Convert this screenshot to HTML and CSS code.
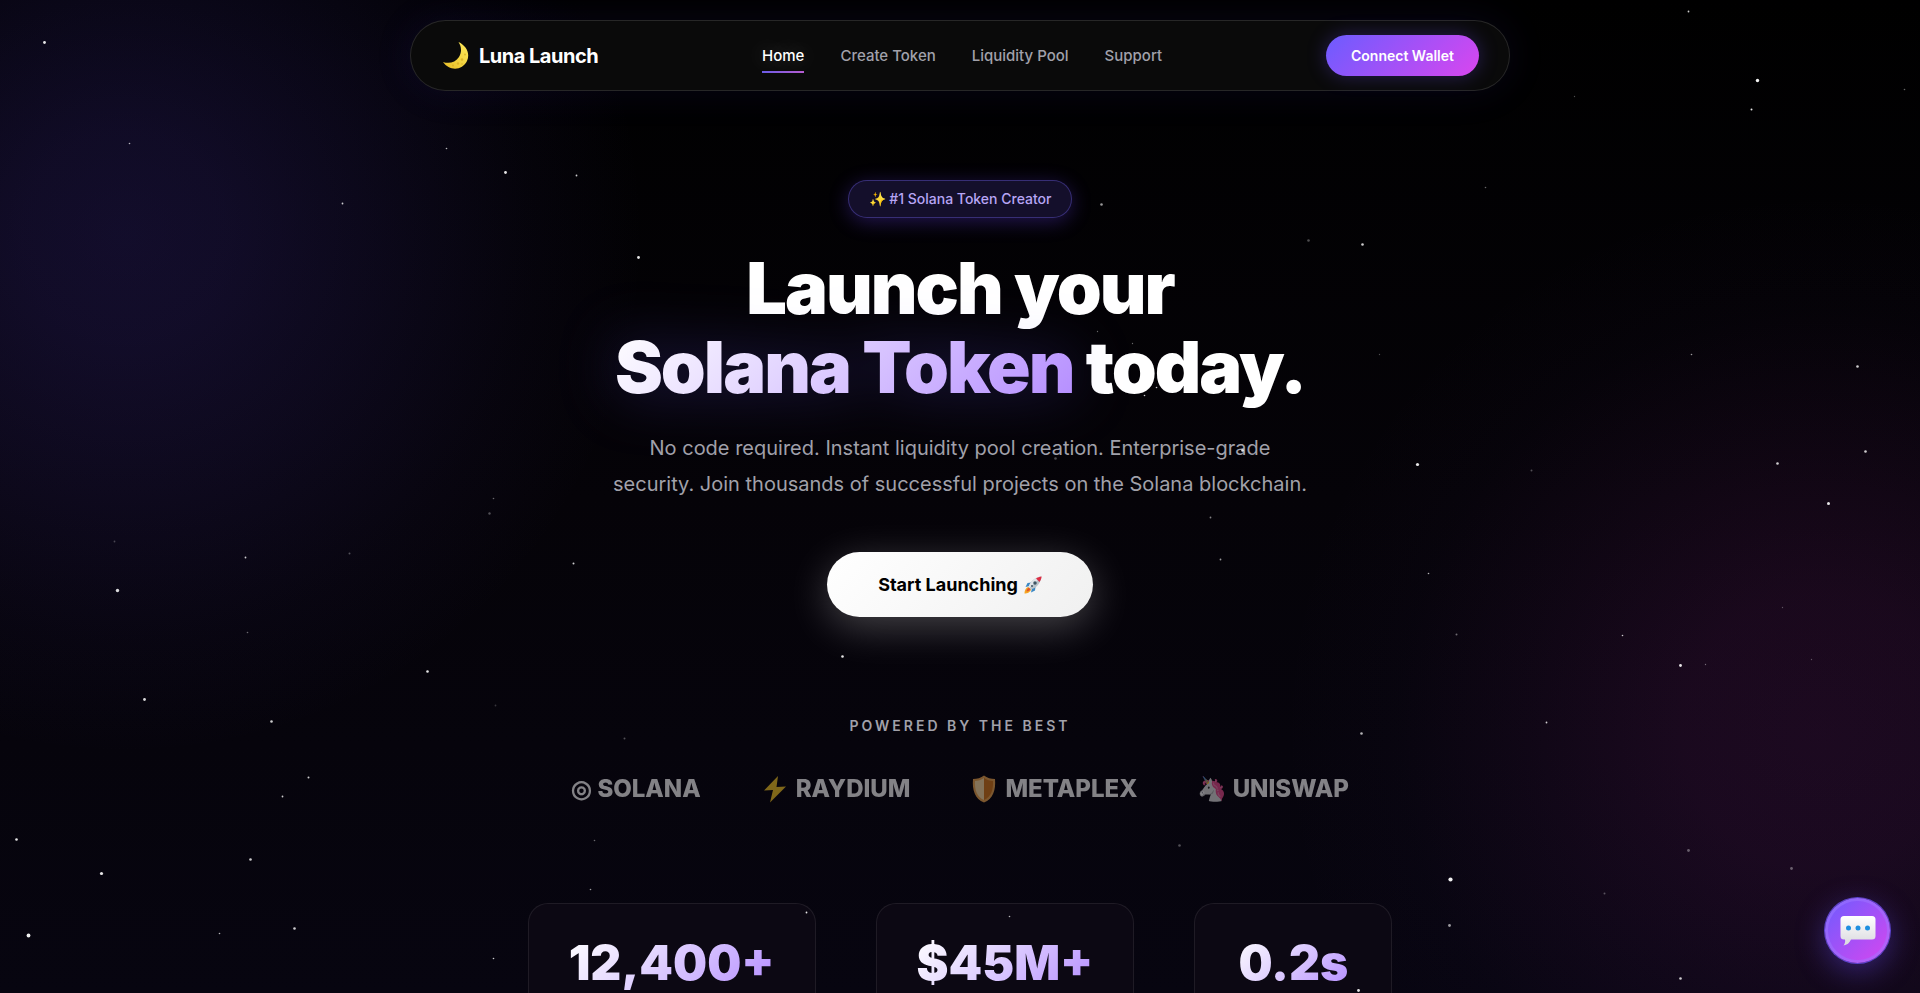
FILE: index.html
```html
<!DOCTYPE html>
<html lang="en">
<head>
<meta charset="utf-8">
<meta name="viewport" content="width=device-width, initial-scale=1">
<title>Luna Launch</title>
<link rel="stylesheet" href="styles.css">
</head>
<body>
<svg class="stars" id="stars" viewBox="0 0 1920 993" preserveAspectRatio="xMidYMid slice" aria-hidden="true"></svg>
<header class="site-header">
  <nav class="nav">
    <a class="logo" href="#">
      <svg class="logo-icon" viewBox="0 0 28 28" aria-hidden="true">
        <defs><linearGradient id="moon" x1="0" y1="1" x2="1" y2="0"><stop offset="0" stop-color="#e8bd25"/><stop offset="1" stop-color="#fdea5c"/></linearGradient></defs>
        <path fill="url(#moon)" d="M16.500 0.500C24 4 28.500 11.500 25 19.500C20.500 29 7.500 30 1 20.500C7 22.500 13.500 21 17 15.500C20 10.500 19.500 5 16.500 .5Z"/>
        <g fill="#d3a81f" opacity=".7"><circle cx="20" cy="18" r="1.300"/><circle cx="16" cy="22" r="1.200"/><circle cx="23" cy="13" r="1"/><circle cx="20" cy="22.500" r=".8"/><circle cx="11" cy="24" r=".9"/></g>
      </svg>
      <span>Luna Launch</span>
    </a>
    <div class="nav-links">
      <a class="nav-link nav-link-active" href="#">Home</a>
      <a class="nav-link" href="#">Create Token</a>
      <a class="nav-link" href="#">Liquidity Pool</a>
      <a class="nav-link" href="#">Support</a>
    </div>
    <button class="wallet" type="button">Connect Wallet</button>
  </nav>
</header>
<main class="hero">
  <div class="badge">✨ #1 Solana Token Creator</div>
  <h1 class="title">Launch your<br><span class="title-accent">Solana Token</span> today.</h1>
  <p class="lead">No code required. Instant liquidity pool creation. Enterprise-grade security. Join thousands of successful projects on the Solana blockchain.</p>
  <button class="cta" type="button">
    <span>Start Launching</span>
    <svg class="cta-icon" viewBox="0 0 36 36" aria-hidden="true">
      <path fill="#f5a623" d="M9 22C4 23 1 29 1 35C7 35 13 32 14 27Z"/>
      <path fill="#e2542b" d="M10 23C7 25 5 28 5 31C9 31 12 29 13 26Z"/>
      <path fill="#3b88c3" d="M15 13L7 14L3 22L12 20ZM23 21L22 29L14 33L16 24Z"/>
      <path fill="#b9c2c9" d="M35 1C24 2 13 9 9 22L14 27C27 23 34 12 35 1Z"/>
      <path fill="#dfe4e8" d="M35 1C24 2 13 9 9 22L11 24L30 6Z"/>
      <path fill="#dd2e44" d="M35 1C31 1 27 3 24 5L31 12C33 9 35 5 35 1Z"/>
      <circle cx="22" cy="14" r="3.500" fill="#3f5563"/>
      <circle cx="16" cy="20" r="2" fill="#3f5563"/>
    </svg>
  </button>
  <section class="partners">
    <h2 class="partners-title">Powered by the best</h2>
    <div class="partners-row">
      <span>◎ SOLANA</span>
      <span class="partner">
        <svg class="partner-icon" viewBox="0 0 24 28" aria-hidden="true"><path fill="#f7c927" d="M15 1L1 15.500L10 15L7 27.500L23 11.500L13.500 12Z"/></svg>
        RAYDIUM
      </span>
      <span class="partner">
        <svg class="partner-icon" viewBox="0 0 24 28" aria-hidden="true">
          <path fill="#f0a850" d="M12 0.500C9 3 5 4 1 4C0 15 3 24 12 27.500C21 24 24 15 23 4C19 4 15 3 12 .5Z"/>
          <path fill="#ffdfa5" d="M12 3C9 5 6 6 3 6C2.500 15 5 22 12 25Z"/>
          <path fill="#d87a1c" d="M12 3C15 5 18 6 21 6C21.500 15 19 22 12 25Z"/>
        </svg>
        METAPLEX
      </span>
      <span>🦄 UNISWAP</span>
    </div>
  </section>
  <section class="stats">
    <div class="stat"><span class="stat-value">12,400+</span></div>
    <div class="stat"><span class="stat-value">$45M+</span></div>
    <div class="stat"><span class="stat-value">0.2s</span></div>
  </section>
</main>
<button class="chat" type="button" aria-label="Open chat">
  <svg class="chat-icon" viewBox="0 0 36 32" aria-hidden="true">
    <defs><linearGradient id="bubble" x1="0" y1="0" x2="0" y2="1"><stop offset="0" stop-color="#fff"/><stop offset="1" stop-color="#d9d9de"/></linearGradient></defs>
    <path fill="url(#bubble)" d="M4 1H32Q35.500 1 35.500 4.500V21Q35.500 24.500 32 24.500H11C9.500 28 7 30 3.500 30.500C5 28.500 5.500 26.500 5 24.500H4Q.5 24.500 .5 21V4.500Q.5 1 4 1Z"/>
    <g fill="#1e8fe0"><circle cx="8.500" cy="13" r="2.500"/><circle cx="18" cy="13" r="2.500"/><circle cx="27.500" cy="13" r="2.500"/></g>
  </svg>
</button>
<script src="stars.js"></script>
</body>
</html>
```

FILE: styles.css
```css
* { box-sizing: border-box; margin: 0; padding: 0; }

body {
  height: 100vh;
  overflow: hidden;
  background:
    radial-gradient(circle 520px at 125px 235px, rgba(84, 60, 200, 0.2) 0%, rgba(84, 60, 200, 0.18) 20%, rgba(84, 60, 200, 0.11) 50%, rgba(84, 60, 200, 0.04) 78%, transparent 100%),
    radial-gradient(circle 540px at calc(100% - 100px) 730px, rgba(190, 50, 180, 0.12) 0%, rgba(190, 50, 180, 0.11) 25%, rgba(170, 50, 180, 0.06) 55%, rgba(120, 50, 180, 0.02) 78%, transparent 100%),
    linear-gradient(180deg, #000 0%, #050308 50%, #070510 100%);
  color: #fff;
  font-family: Inter, "Liberation Sans", sans-serif;
}

a { color: inherit; text-decoration: none; }
button { border: 0; font-family: inherit; cursor: pointer; }

.stars { position: fixed; inset: 0; width: 100%; height: 100%; pointer-events: none; z-index: 2; fill: #fff; }

.site-header { padding: 20px 20px 0; }
.nav {
  display: flex;
  justify-content: space-between;
  align-items: center;
  max-width: 1100px;
  margin: 0 auto;
  padding: 14px 30px;
  border: 1px solid rgba(255, 255, 255, 0.12);
  border-radius: 50px;
  background: #0a0a0a;
  box-shadow: 0 0 40px rgba(80, 60, 220, 0.1);
}
.logo { display: flex; align-items: center; gap: 9px; padding-left: 1px; font-size: 20px; font-weight: 700; letter-spacing: -0.5px; }
.logo-icon { width: 28px; height: 29px; }
.nav-links { display: flex; gap: 36px; }
.nav-link { position: relative; color: #a1a1aa; font-size: 15px; font-weight: 500; line-height: 20px; }
.nav-link-active { color: #fff; text-shadow: 0 0 20px rgba(255, 255, 255, 0.3); }
.nav-link-active::after {
  content: "";
  position: absolute;
  left: 0;
  right: 0;
  bottom: -7px;
  height: 2px;
  background: linear-gradient(90deg, #6c5ce7, #b65cd0);
}
.wallet {
  padding: 12px 25px;
  border-radius: 30px;
  background: linear-gradient(135deg, #6c5cff, #d946ef);
  box-shadow: 0 0 20px rgba(108, 80, 255, 0.3);
  color: #fff;
  font-size: 14px;
  font-weight: 600;
  line-height: 17px;
}

.hero { display: flex; flex-direction: column; align-items: center; padding: 89px 20px 0; text-align: center; }
.badge {
  padding: 8px 20px;
  border: 1px solid rgba(108, 92, 231, 0.4);
  border-radius: 30px;
  background: #140f2b;
  box-shadow: 0 4px 20px rgba(108, 70, 255, 0.3);
  color: #b7a5f5;
  font-size: 14px;
  font-weight: 500;
  line-height: 20px;
}
.title { margin-top: 30px; font-size: 72px; font-weight: 900; line-height: 79px; letter-spacing: -2px; }
.title-accent {
  background: linear-gradient(135deg, #fff 0%, #e2d4ff 40%, #b48cff 100%);
  background-clip: text;
  -webkit-background-clip: text;
  color: transparent;
  filter: drop-shadow(0 0 30px rgba(108, 92, 255, 0.3));
}
.lead { max-width: 700px; margin-top: 24px; color: #a1a1aa; font-size: 20px; line-height: 36px; }
.cta {
  display: flex;
  align-items: center;
  gap: 6px;
  margin-top: 50px;
  padding: 21px 51px;
  border-radius: 50px;
  background: linear-gradient(135deg, #fff, #f0f0f0);
  box-shadow: 0 10px 40px rgba(255, 255, 255, 0.25);
  color: #000;
  font-size: 18px;
  font-weight: 700;
  line-height: 23px;
}
.cta-icon { width: 18px; height: 18px; }
.partners { margin-top: 100px; }
.partners-title { color: #a1a1aa; font-size: 14px; font-weight: 600; line-height: 18px; letter-spacing: 3px; text-transform: uppercase; }
.partners-row { display: flex; justify-content: center; gap: 60px; margin-top: 38px; font-size: 24px; font-weight: 800; line-height: 32px; opacity: 0.5; }
.partner { display: flex; align-items: center; gap: 7px; }
.partner-icon { width: 28px; height: 28px; }
.stats { display: flex; justify-content: center; gap: 60px; margin-top: 98px; }
.stat {
  min-width: 198px;
  padding: 30px 40px;
  border: 1px solid rgba(255, 255, 255, 0.08);
  border-radius: 20px;
  background: #0c0813;
}
.stat-value {
  display: inline-block;
  background: linear-gradient(135deg, #fff 0%, #e2d4ff 40%, #b48cff 100%);
  background-clip: text;
  -webkit-background-clip: text;
  color: transparent;
  font-size: 48px;
  font-weight: 900;
  line-height: 58px;
}
.chat {
  display: grid;
  place-items: center;
  position: fixed;
  right: 30px;
  bottom: 30px;
  width: 65px;
  height: 65px;
  border-radius: 50%;
  background: linear-gradient(135deg, #6c5cff, #d946ef);
  box-shadow: inset 0 0 0 3px rgba(160, 120, 255, 0.5), 0 0 0 1px rgba(108, 80, 240, 0.8), 0 8px 30px rgba(108, 80, 255, 0.4);
}
.chat-icon { width: 36px; height: 32px; }
```

FILE: stars.js
```js
// Each star: x, y, radius, opacity
const stars = [
  [44, 42, 1.3, 0.9], [129, 143, 0.7, 0.7], [342, 203, 0.8, 0.8], [446, 148, 0.7, 0.7], [505, 172, 1.3, 0.9],
  [576, 175, 0.8, 0.8], [114, 541, 0.8, 0.25], [117, 590, 1.6, 0.85], [245, 557, 0.8, 0.8], [349, 553, 0.9, 0.3],
  [489, 513, 1.1, 0.3], [493, 498, 0.7, 0.4], [573, 563, 0.9, 0.8], [247, 632, 0.7, 0.4], [144, 699, 1.3, 0.85],
  [271, 721, 1.2, 0.8], [427, 671, 1.2, 0.9], [495, 705, 0.8, 0.2], [308, 777, 0.9, 0.8], [282, 796, 0.8, 0.8],
  [16, 839, 1.2, 0.9], [101, 873, 1.5, 0.9], [250, 859, 1.2, 0.8], [28, 935, 1.8, 0.95], [219, 933, 0.7, 0.7],
  [294, 928, 1.2, 0.8], [493, 958, 0.7, 0.8], [594, 840, 0.7, 0.4], [590, 889, 0.7, 0.6],
  [1688, 11, 0.8, 0.8], [1757, 80, 1.6, 0.95], [1751, 109, 0.9, 0.9], [1574, 96, 0.6, 0.3], [1904, 89, 0.7, 0.4],
  [1485, 187, 0.7, 0.4], [1362, 244, 1.2, 0.8], [1691, 354, 0.7, 0.6], [1379, 354, 0.6, 0.3], [1857, 366, 1.2, 0.8],
  [1865, 451, 1.2, 0.8], [1777, 463, 1.2, 0.8], [1828, 503, 1.4, 0.9], [1417, 464, 1.5, 0.9], [1531, 470, 0.9, 0.3],
  [1428, 573, 0.7, 0.7], [1456, 634, 0.9, 0.4], [1622, 635, 0.7, 0.8], [1782, 607, 0.6, 0.3], [1680, 665, 1.3, 0.9],
  [1705, 664, 0.6, 0.4], [1811, 659, 0.6, 0.3], [1546, 722, 0.8, 0.8], [1361, 733, 1.2, 0.7], [1688, 850, 1.3, 0.35],
  [1791, 868, 1.3, 0.35], [1450, 879, 2, 0.95], [1449, 925, 1.3, 0.6], [1604, 893, 0.9, 0.3], [1680, 978, 1.2, 0.8],
  [1358, 990, 1.3, 0.9], [638, 257, 1.3, 0.9], [842, 656, 1.2, 0.9], [1101, 204, 1.2, 0.6], [1308, 240, 1.2, 0.3],
  [1242, 450, 1.2, 0.9], [1055, 458, 1.2, 0.3], [1210, 517, 0.8, 0.5], [1220, 559, 0.8, 0.6], [624, 738, 0.9, 0.3],
  [1179, 845, 1.2, 0.3], [806, 912, 0.8, 0.9], [1009, 916, 0.7, 0.7], [1144, 395, 0.7, 0.8], [1156, 387, 0.7, 0.8],
  [1132, 343, 0.6, 0.4], [1097, 331, 0.6, 0.4]
];

const sky = document.getElementById("stars");
for (const [x, y, radius, opacity] of stars) {
  const star = document.createElementNS("http://www.w3.org/2000/svg", "circle");
  star.setAttribute("cx", x + 0.5);
  star.setAttribute("cy", y + 0.5);
  star.setAttribute("r", radius + 0.1);
  star.setAttribute("opacity", opacity);
  sky.append(star);
}
```
